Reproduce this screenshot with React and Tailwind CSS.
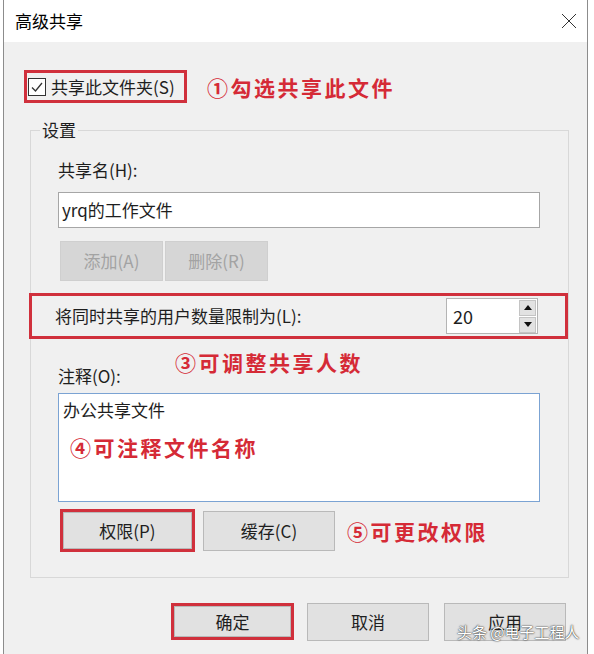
import React from 'react';

const Btn = ({ children, className = '', disabled = false }) => (
  <div
    className={`flex items-center justify-center border text-[17px] ${
      disabled
        ? 'bg-[#d6d6d6] border-[#cfcfcf] text-[#a3a3a3]'
        : 'bg-[#e1e1e1] border-[#b9b9b9] text-[#1e1e1e]'
    } ${className}`}
  >
    {children}
  </div>
);

const Note = ({ children, className = '' }) => (
  <span className={`text-[21px] leading-[26px] font-bold tracking-[2.5px] text-[#d52a36] whitespace-nowrap ${className}`}>
    {children}
  </span>
);

const App = () => {
  return (
    <div className="relative w-[594px] h-[654px] overflow-hidden bg-white font-['Noto_Sans_CJK_SC','Liberation_Sans',sans-serif] text-[#1e1e1e]">
      <div className="ml-[3px] w-[585px] h-full flex flex-col border-l border-r border-[#8c8c8c]">
        {/* Title bar */}
        <div className="h-[42px] shrink-0 bg-white flex items-center justify-between pl-[11px] pr-[10px]">
          <span className="text-[17px] text-black">高级共享</span>
          <svg width="16" height="16" viewBox="0 0 16 16" className="text-[#333]">
            <path d="M1 1 L15 15 M15 1 L1 15" stroke="currentColor" strokeWidth="1" />
          </svg>
        </div>

        {/* Body */}
        <div className="flex-1 bg-[#f0f0f0] pt-[28px]">
          {/* Share checkbox */}
          <div className="flex items-center">
            <div className="ml-[20px] w-[163px] h-[33px] border-[3px] border-[#d0303c] flex items-center pl-[1px]">
              <div className="w-[18px] h-[18px] border border-[#333] bg-white flex items-center justify-center">
                <svg width="14" height="14" viewBox="0 0 14 14">
                  <path d="M2 7.5 L5.5 11 L12 3" fill="none" stroke="#333" strokeWidth="1.3" />
                </svg>
              </div>
              <span className="ml-[5px] text-[17px] leading-[22px] whitespace-nowrap">共享此文件夹(S)</span>
            </div>
            <Note className="ml-[20px]">①勾选共享此文件</Note>
          </div>

          {/* Settings group */}
          <fieldset className="mt-[16px] ml-[26px] w-[536px] border border-[#d8d8d8] px-0">
            <legend className="ml-[9px] px-[2px] text-[17px] leading-[22px]">设置</legend>
            <div className="pl-[27px] pt-[18px] pb-[25px]">
              <div className="h-[22px] text-[17px] leading-[22px]">共享名(H):</div>
              <div className="mt-[11px] w-[482px] h-[36px] bg-white border border-[#a6a6a6] flex items-center pl-[3px] text-[17px]">
                yrq的工作文件
              </div>

              <div className="mt-[13px] ml-[2px] flex gap-[2px]">
                <Btn disabled className="w-[103px] h-[40px]">添加(A)</Btn>
                <Btn disabled className="w-[103px] h-[40px]">删除(R)</Btn>
              </div>

              {/* User limit */}
              <div className="mt-[12px] ml-[-29px] w-[539px] h-[46px] border-[3px] border-[#d0303c] flex items-center justify-between pl-[23px] pr-[27px]">
                <span className="text-[17px] whitespace-nowrap">将同时共享的用户数量限制为(L):</span>
                <div className="w-[92px] h-[36px] bg-white border border-[#b4b4b4] flex items-center justify-between pl-[6px] pr-[1px]">
                  <span className="text-[18px]">20</span>
                  <div className="flex flex-col gap-[1px]">
                    <div className="w-[17px] h-[16px] bg-[#e2e2e2] border border-[#c4c4c4] flex items-center justify-center">
                      <svg width="8" height="5" viewBox="0 0 8 5"><path d="M0 5 L4 0 L8 5 Z" fill="#111" /></svg>
                    </div>
                    <div className="w-[17px] h-[16px] bg-[#e2e2e2] border border-[#c4c4c4] flex items-center justify-center">
                      <svg width="8" height="5" viewBox="0 0 8 5"><path d="M0 0 L8 0 L4 5 Z" fill="#111" /></svg>
                    </div>
                  </div>
                </div>
              </div>

              {/* Comment */}
              <div className="h-[48px] flex items-start">
                <div className="mt-[26px] w-[117px] h-[22px] text-[17px] leading-[22px]">注释(O):</div>
                <Note className="mt-[10px]">③可调整共享人数</Note>
              </div>
              <div className="mt-[6px] w-[482px] h-[109px] bg-white border border-[#7ba3d3] pl-[4px] pt-[5px]">
                <div className="text-[17px] leading-[22px]">办公共享文件</div>
                <Note className="block mt-[13px] ml-[7px]">④可注释文件名称</Note>
              </div>

              <div className="mt-[7px] flex items-center">
                <div className="ml-[2px] w-[135px] h-[43px] border-[3px] border-[#d0303c] flex">
                  <Btn className="flex-1">权限(P)</Btn>
                </div>
                <Btn className="ml-[8px] w-[132px] h-[40px]">缓存(C)</Btn>
                <Note className="ml-[12px]">⑤可更改权限</Note>
              </div>
            </div>
          </fieldset>

          {/* Dialog buttons */}
          <div className="mt-[25px] flex justify-end items-start pr-[21px]">
            <div className="w-[123px] h-[37px] border-[3px] border-[#d0303c] flex">
              <Btn className="flex-1">确定</Btn>
            </div>
            <Btn className="ml-[13px] w-[122px] h-[38px]">取消</Btn>
            <Btn className="ml-[15px] w-[122px] h-[38px]">应用</Btn>
          </div>
        </div>
      </div>

      {/* Watermark */}
      <span className="absolute left-[457px] top-[621px] text-[15px] text-white whitespace-nowrap [text-shadow:0_0_2px_#333,0_0_1px_#333]">
        头条 @电子工程人
      </span>
    </div>
  );
};

export default App;
